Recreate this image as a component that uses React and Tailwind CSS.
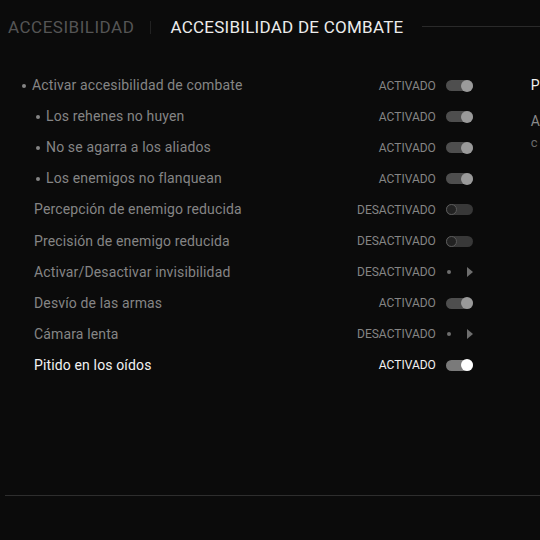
import React from "react";

const rows = [
  { label: "Activar accesibilidad de combate", bullet: 1, value: "ACTIVADO", ctl: "on" },
  { label: "Los rehenes no huyen", bullet: 2, value: "ACTIVADO", ctl: "on" },
  { label: "No se agarra a los aliados", bullet: 2, value: "ACTIVADO", ctl: "on" },
  { label: "Los enemigos no flanquean", bullet: 2, value: "ACTIVADO", ctl: "on" },
  { label: "Percepción de enemigo reducida", bullet: 0, value: "DESACTIVADO", ctl: "off" },
  { label: "Precisión de enemigo reducida", bullet: 0, value: "DESACTIVADO", ctl: "off" },
  { label: "Activar/Desactivar invisibilidad", bullet: 0, value: "DESACTIVADO", ctl: "arrow" },
  { label: "Desvío de las armas", bullet: 0, value: "ACTIVADO", ctl: "on" },
  { label: "Cámara lenta", bullet: 0, value: "DESACTIVADO", ctl: "arrow" },
  { label: "Pitido en los oídos", bullet: 0, value: "ACTIVADO", ctl: "on", active: true },
];

function Control({ kind, active }) {
  if (kind === "on") {
    return (
      <div className={`w-[27px] h-[11px] rounded-full flex items-center justify-end ${active ? "bg-[#7a7a7a]" : "bg-[#4e4e4e]"}`}>
        <div className={`w-[12px] h-[12px] rounded-full ${active ? "bg-white" : "bg-[#9a9a9a]"}`} />
      </div>
    );
  }
  if (kind === "off") {
    return (
      <div className="w-[27px] h-[11px] rounded-full flex items-center justify-start bg-[#383838]">
        <div className="w-[11px] h-[11px] rounded-full bg-[#222] border border-[#5a5a5a]" />
      </div>
    );
  }
  return (
    <div className="w-[27px] h-[11px] flex items-center justify-between">
      <div className="ml-[1px] w-[4px] h-[4px] rounded-full bg-[#6e6e6e]" />
      <svg width="6" height="10" viewBox="0 0 6 10">
        <polygon points="0,0 6,5 0,10" fill="#6e6e6e" />
      </svg>
    </div>
  );
}

export default function App() {
  return (
    <div
      className="w-[540px] h-[540px] bg-[#0b0b0b] overflow-hidden flex flex-col"
      style={{ fontFamily: "Roboto, 'Noto Sans', sans-serif" }}
    >
      <div className="h-[55px] flex items-center">
        <div className="pl-[8px] text-[17px] tracking-[0.03em] text-[#555]">ACCESIBILIDAD</div>
        <div className="ml-[16px] w-[1px] h-[13px] bg-[#222]" />
        <div className="ml-[19px] text-[17px] tracking-[0.015em] text-[#ececec]">ACCESIBILIDAD DE COMBATE</div>
        <div className="ml-[18px] flex-1 h-[1px] bg-[#2a2a2a] -mt-[2px]" />
      </div>
      <div className="flex-1 flex mt-[15px]">
        <div className="w-[477px] flex flex-col">
          {rows.map((r, i) => (
            <div key={i} className="h-[31.1px] flex items-center">
              <div
                className={`flex-1 flex items-center text-[14px] tracking-[0.01em] ${r.active ? "text-[#f2f2f2]" : "text-[#858585]"} ${
                  r.bullet === 1 ? "pl-[22px]" : r.bullet === 2 ? "pl-[36px]" : "pl-[34px]"
                }`}
              >
                {r.bullet > 0 && <span className="w-[4px] h-[4px] rounded-full bg-[#858585] mr-[6px]" />}
                <span>{r.label}</span>
              </div>
              <div className={`text-[12px] ${r.active ? "text-[#f2f2f2]" : "text-[#858585]"}`}>{r.value}</div>
              <div className="ml-[10px] mr-[2px]">
                <Control kind={r.ctl} active={r.active} />
              </div>
            </div>
          ))}
        </div>
        <div className="pl-[56px] flex flex-col">
          <div className="h-[31px] flex items-center text-[14px] text-[#f0f0f0]">P</div>
          <div className="mt-[8px] text-[14px] leading-[24px] text-[#8a8a8a]">A</div>
          <div className="text-[13px] leading-[20px] text-[#6a6a6a]">c</div>
        </div>
      </div>
      <div className="h-[45px] ml-[5px] border-t border-[#2e2e2e]" />
    </div>
  );
}
